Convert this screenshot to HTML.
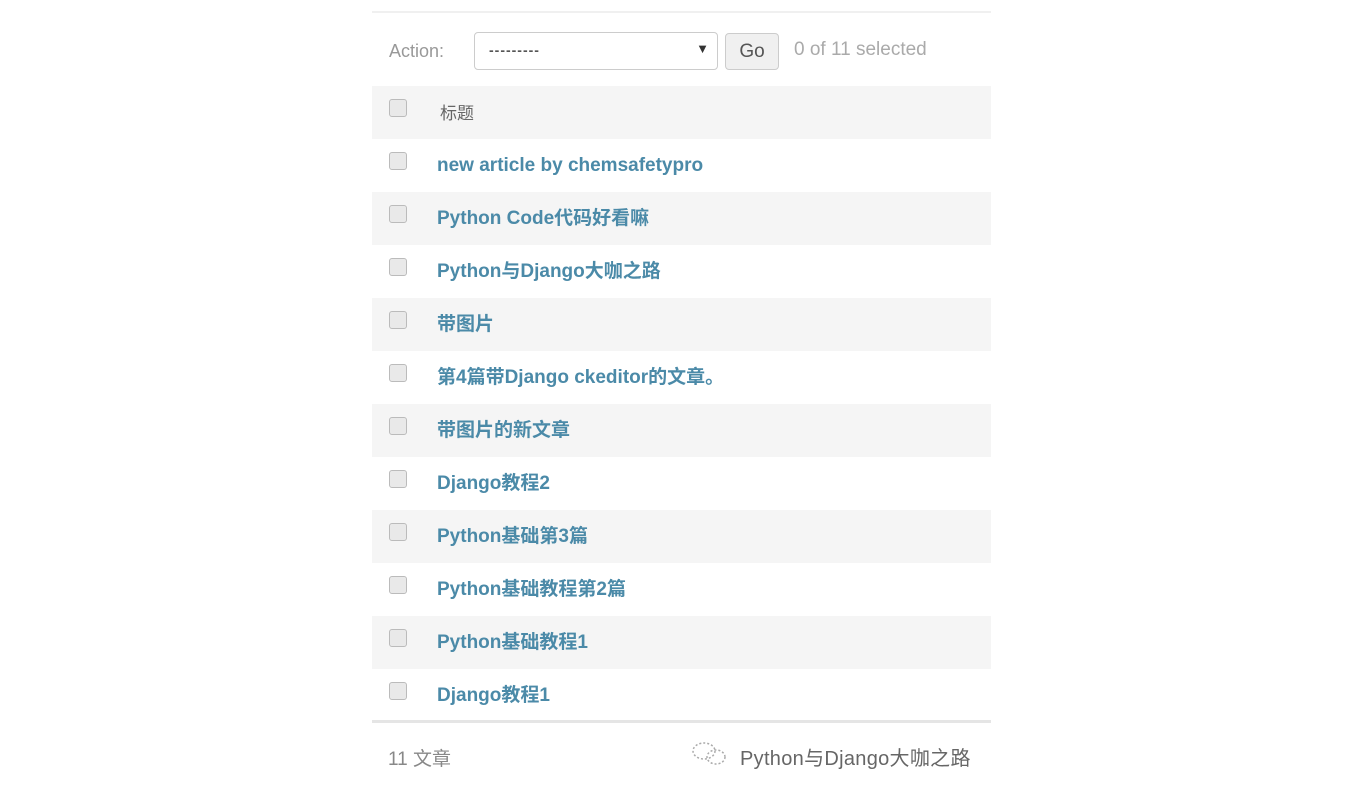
<!DOCTYPE html><html><head><meta charset="utf-8"><style>
body{margin:0;width:1359px;height:811px;background:#fff;font-family:"Liberation Sans","Noto Sans CJK SC",sans-serif;position:relative;overflow:hidden}
.topline{position:absolute;left:372px;top:11px;width:619px;height:2px;background:#f0f0f0}
.act{position:absolute;top:32px;left:372px;width:619px;height:40px}
.lbl{position:absolute;left:17px;top:9px;color:#999;font-size:18px}
.sel{position:absolute;left:102px;top:0;width:242px;height:36px;border:1px solid #ccc;border-radius:4px;background:#fff}
.sel span{position:absolute;left:14px;top:9px;color:#555;font-size:14px;letter-spacing:1px;font-weight:bold}
.sel i{position:absolute;right:8px;top:8px;font-style:normal;font-size:13px;color:#333}
.go{position:absolute;left:353px;top:1px;width:52px;height:35px;border:1px solid #ccc;border-radius:4px;background:#f0f0f0;color:#555;font-size:19px;text-align:center;line-height:35px}
.cnt{position:absolute;left:422px;top:7px;color:#aaa;font-size:19px}
.row{position:absolute;left:372px;width:619px;height:53px}
.g{background:#f5f5f5}
.cb{position:absolute;left:17px;top:13px;width:16px;height:16px;border:1px solid #bbb;border-radius:3px;background:#e9e9e9}
.t{position:absolute;left:65px;top:16px;font-size:19px;line-height:22px;height:22px;font-weight:bold;color:#4b8aa8;white-space:nowrap}
.h .t{color:#666;font-weight:normal;font-size:17px;top:17px;left:68px}
.botline{position:absolute;left:372px;top:720px;width:619px;height:3px;background:#e5e5e5}
.foot{position:absolute;left:388px;top:744px;color:#888;font-size:19px}
.wm{position:absolute;left:740px;top:742px;color:#666;font-size:20px;letter-spacing:0.3px}
</style></head><body>
<div class="topline"></div>
<div class="act"><div class="lbl">Action:</div><div class="sel"><span>---------</span><i>▼</i></div><div class="go">Go</div><div class="cnt">0 of 11 selected</div></div>
<div class="row g h" style="top:86px"><div class="cb"></div><div class="t">标题</div></div>
<div class="row" style="top:139px"><div class="cb"></div><div class="t">new article by chemsafetypro</div></div>
<div class="row g" style="top:192px"><div class="cb"></div><div class="t">Python Code代码好看嘛</div></div>
<div class="row" style="top:245px"><div class="cb"></div><div class="t">Python与Django大咖之路</div></div>
<div class="row g" style="top:298px"><div class="cb"></div><div class="t">带图片</div></div>
<div class="row" style="top:351px"><div class="cb"></div><div class="t">第4篇带Django ckeditor的文章。</div></div>
<div class="row g" style="top:404px"><div class="cb"></div><div class="t">带图片的新文章</div></div>
<div class="row" style="top:457px"><div class="cb"></div><div class="t">Django教程2</div></div>
<div class="row g" style="top:510px"><div class="cb"></div><div class="t">Python基础第3篇</div></div>
<div class="row" style="top:563px"><div class="cb"></div><div class="t">Python基础教程第2篇</div></div>
<div class="row g" style="top:616px"><div class="cb"></div><div class="t">Python基础教程1</div></div>
<div class="row" style="top:669px"><div class="cb"></div><div class="t">Django教程1</div></div>
<div class="botline"></div>
<div class="foot">11 文章</div>
<svg style="position:absolute;left:690px;top:740px" width="40" height="28"><g fill="none" stroke="#aaa" stroke-width="1.5" stroke-dasharray="2 2"><ellipse cx="14" cy="11" rx="11" ry="8"/><ellipse cx="26" cy="17" rx="9" ry="7"/></g></svg>
<div class="wm">Python与Django大咖之路</div>
</body></html>
